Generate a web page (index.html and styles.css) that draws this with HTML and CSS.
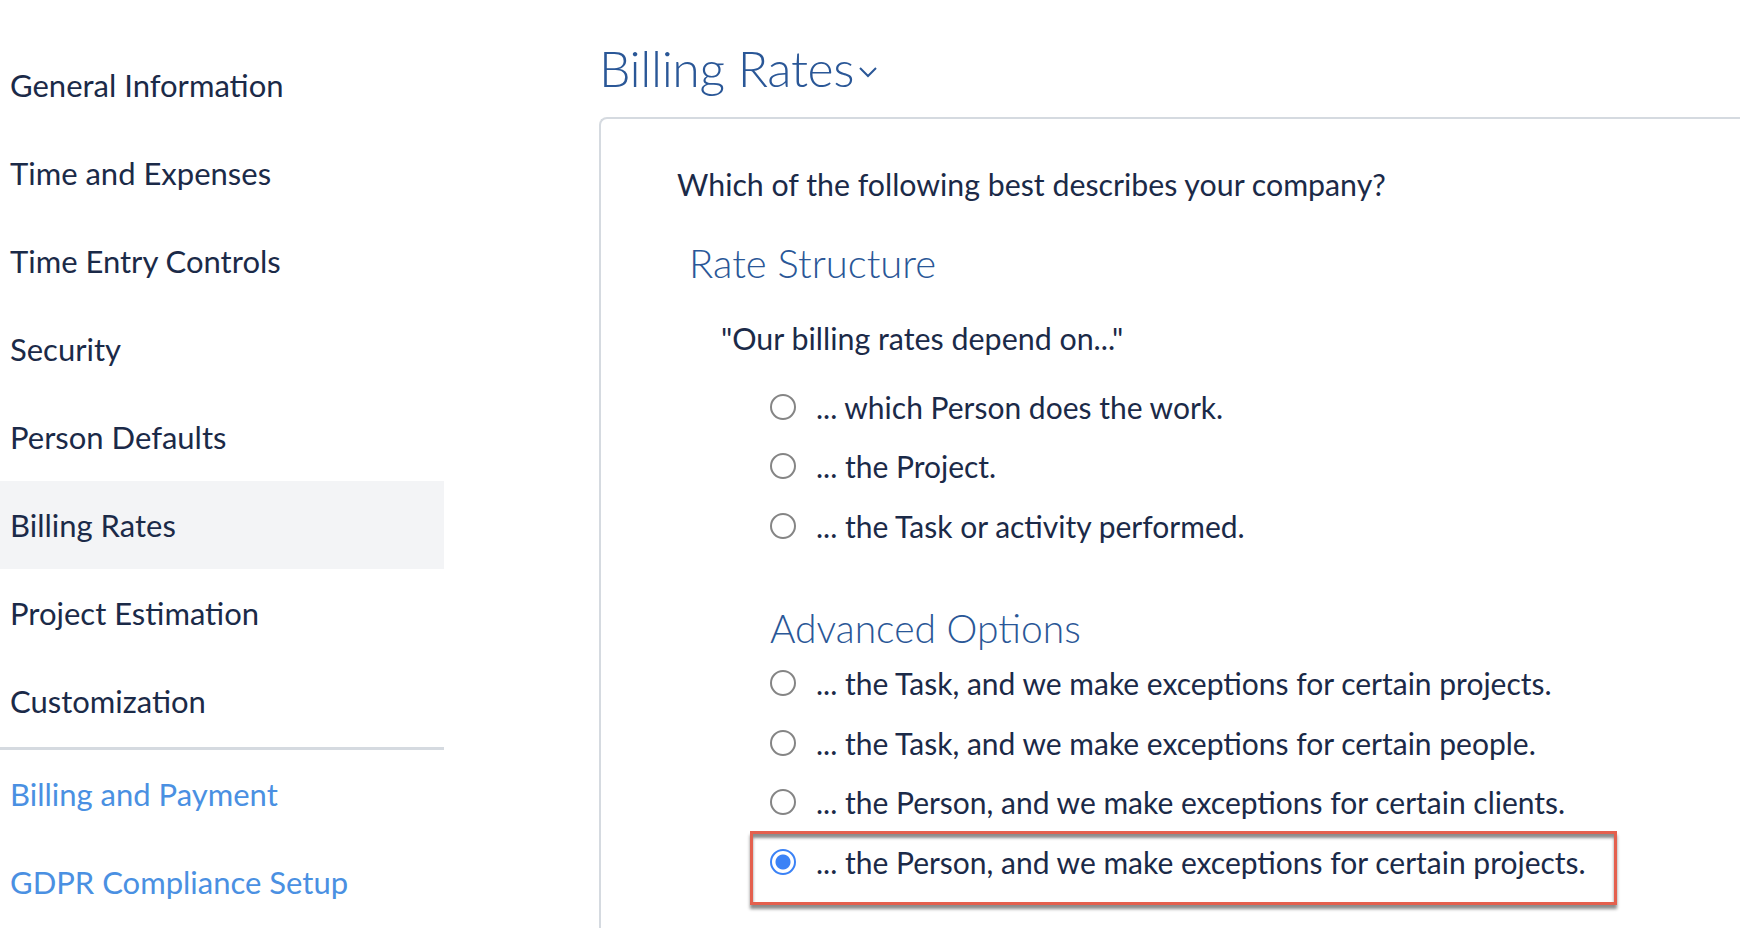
FILE: index.html
```html
<!DOCTYPE html>
<html lang="en">
<head>
    <meta charset="UTF-8">
    <meta name="viewport" content="width=device-width, initial-scale=1.0">
    <title>Billing Rates</title>
    <link rel="stylesheet" href="styles.css">
</head>
<body>
    <div class="page">
        <nav class="sidebar">
            <a class="nav-item">General Information</a>
            <a class="nav-item">Time and Expenses</a>
            <a class="nav-item">Time Entry Controls</a>
            <a class="nav-item">Security</a>
            <a class="nav-item">Person Defaults</a>
            <a class="nav-item active">Billing Rates</a>
            <a class="nav-item">Project Estimation</a>
            <a class="nav-item">Customization</a>
            <div class="nav-divider"></div>
            <a class="nav-item link">Billing and Payment</a>
            <a class="nav-item link">GDPR Compliance Setup</a>
        </nav>

        <main class="content">
            <h1 class="page-title">
                Billing Rates
                <svg class="chevron" width="20" height="12" viewBox="0 0 20 12">
                    <path d="M2 2 L10 10 L18 2" fill="none" stroke="#2a5797" stroke-width="2"/>
                </svg>
            </h1>

            <div class="card">
                <p class="question">Which of the following best describes your company?</p>

                <h2 class="section-title">Rate Structure</h2>
                <p class="quote">"Our billing rates depend on..."</p>

                <ul class="options">
                    <li class="option"><span class="radio"></span>... which Person does the work.</li>
                    <li class="option"><span class="radio"></span>... the Project.</li>
                    <li class="option"><span class="radio"></span>... the Task or activity performed.</li>
                </ul>

                <h2 class="section-title advanced">Advanced Options</h2>

                <ul class="options advanced-options">
                    <li class="option"><span class="radio"></span>... the Task, and we make exceptions for certain projects.</li>
                    <li class="option"><span class="radio"></span>... the Task, and we make exceptions for certain people.</li>
                    <li class="option"><span class="radio"></span>... the Person, and we make exceptions for certain clients.</li>
                    <li class="option marked"><span class="radio checked"></span>... the Person, and we make exceptions for certain projects.</li>
                </ul>
            </div>
        </main>
    </div>
</body>
</html>
```

FILE: styles.css
```css
*{
    margin: 0;
    padding: 0;
    box-sizing: border-box;
}

body{
    font-family: Lato, "Open Sans", sans-serif;
    color: #1b2a48;
    background-color: #fff;
    overflow: hidden;
    height: 928px;
}

.page{
    display: flex;
    height: 100%;
}

/* left menu */
.sidebar{
    width: 444px;
    flex-shrink: 0;
    padding-top: 41px;
    display: flex;
    flex-direction: column;
}

.nav-item{
    height: 88px;
    display: flex;
    align-items: center;
    padding-left: 10px;
    font-size: 31px;
    color: #1b2a48;
}

.nav-item.active{
    background-color: #f3f4f6;
}

.nav-item.link{
    color: #4a90e2;
}

.nav-divider{
    height: 3px;
    margin-top: 2px;
    background-color: #d5dae0;
}

/* main area */
.content{
    flex: 1;
    margin-left: 155px;
    display: flex;
    flex-direction: column;
}

.page-title{
    height: 117px;
    padding-top: 36px;
    font-size: 50px;
    font-weight: 300;
    letter-spacing: -0.4px;
    line-height: 64px;
    color: #2a5797;
    display: flex;
    align-items: flex-start;
    gap: 4px;
}

.chevron{
    margin-top: 30px;
}

.card{
    flex: 1;
    border: 2px solid #d5dae0;
    border-right: none;
    border-bottom: none;
    border-top-left-radius: 8px;
    padding-top: 45px;
    padding-left: 76px;
}

.question{
    font-size: 30.3px;
    line-height: 40px;
}

.section-title{
    margin-top: 34px;
    margin-left: 12px;
    font-size: 40px;
    font-weight: 300;
    line-height: 50px;
    color: #2a5797;
}

.quote{
    margin-top: 30px;
    margin-left: 44px;
    font-size: 30.4px;
    line-height: 40px;
}

.options{
    list-style: none;
    margin-top: 19px;
    margin-left: 93px;
}

.section-title.advanced{
    margin-top: 47px;
    margin-left: 93px;
    font-size: 39px;
}

.options.advanced-options{
    margin-top: 1px;
}

.option{
    height: 59.5px;
    display: flex;
    align-items: center;
    gap: 20px;
    font-size: 30px;
    position: relative;
}

.radio{
    width: 26px;
    height: 26px;
    border: 2px solid #858585;
    border-radius: 50%;
    background-color: #fff;
    flex-shrink: 0;
}

.radio.checked{
    border-color: #3b82f6;
    background: radial-gradient(circle, #3b82f6 0 7px, #fff 8px);
}

/* red annotation box */
.option.marked::after{
    content: "";
    position: absolute;
    left: -20px;
    top: -1px;
    width: 861px;
    height: 68px;
    border: 3px solid #e4604e;
    box-shadow: 0 4px 3px rgba(0, 0, 0, 0.45), inset 0 4px 3px rgba(0, 0, 0, 0.45);
}
```
